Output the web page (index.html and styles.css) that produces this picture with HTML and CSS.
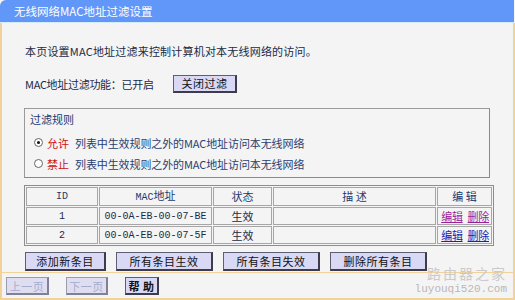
FILE: index.html
```html
<!DOCTYPE html>
<html lang="zh-CN">
<head>
<meta charset="utf-8">
<title>无线网络MAC地址过滤设置</title>
<link rel="stylesheet" href="styles.css">
</head>
<body>
<div class="page">
  <div class="title">无线网络MAC地址过滤设置</div>
  <div class="panel">
    <div class="content">
      <p class="intro">本页设置MAC地址过滤来控制计算机对本无线网络的访问。</p>
      <div class="status">
        <span class="status-label">MAC地址过滤功能：已开启</span>
        <button class="btn btn-close">关闭过滤</button>
      </div>
      <div class="rules">
        <div class="rules-title">过滤规则</div>
        <label class="rule"><span class="radio checked"></span><span class="red">允许</span><span class="rule-text">列表中生效规则之外的MAC地址访问本无线网络</span></label>
        <label class="rule"><span class="radio"></span><span class="red">禁止</span><span class="rule-text">列表中生效规则之外的MAC地址访问本无线网络</span></label>
      </div>
      <table class="list">
        <colgroup>
          <col class="c-id"><col class="c-mac"><col class="c-st"><col class="c-desc"><col class="c-edit">
        </colgroup>
        <tr class="head">
          <td class="mono">ID</td><td><span class="mono">MAC</span>地址</td><td>状态</td><td>描 述</td><td>编 辑</td>
        </tr>
        <tr>
          <td class="mono">1</td><td class="mono">00-0A-EB-00-07-BE</td><td>生效</td><td></td><td class="links"><a class="visited">编辑</a><a class="visited">删除</a></td>
        </tr>
        <tr>
          <td class="mono">2</td><td class="mono">00-0A-EB-00-07-5F</td><td>生效</td><td></td><td class="links"><a>编辑</a><a>删除</a></td>
        </tr>
      </table>
      <div class="actions">
        <button class="btn w81">添加新条目</button>
        <button class="btn w97">所有条目生效</button>
        <button class="btn w97">所有条目失效</button>
        <button class="btn w97">删除所有条目</button>
      </div>
    </div>
    <div class="footer">
      <button class="btn small disabled w43">上一页</button>
      <button class="btn small disabled w42">下一页</button>
      <button class="btn small help">帮 助</button>
    </div>
  </div>
  <div class="watermark">
    <div class="wm-cn">路由器之家</div>
    <div class="wm-en">luyouqi520.com</div>
  </div>
</div>
</body>
</html>
```

FILE: styles.css
```css
* { box-sizing: border-box; }
html, body { margin: 0; padding: 0; }
body {
  width: 515px;
  height: 300px;
  overflow: hidden;
  background: #f4f4f4;
  font-family: "Noto Sans CJK SC", "Noto Sans", sans-serif;
  font-size: 11px;
  color: #1c2a44;
}
.page {
  position: relative;
  width: 515px;
  height: 300px;
  display: flex;
  flex-direction: column;
}
.title {
  height: 23px;
  background: #6197f8;
  border-top-left-radius: 6px;
  border-bottom: 1px solid #d6ecfb;
  color: #fff;
  font-size: 11.5px;
  line-height: 22px;
  padding-left: 14px;
  margin-right: 1px;
}
.panel {
  flex: 1;
  display: flex;
  flex-direction: column;
  border-left: 2px solid #f1d39a;
  border-right: 2px solid #f1d39a;
  border-bottom: 2px solid #f1d39a;
  background: #f4f4f4;
}
.content {
  padding-left: 22px;
  height: 249px;
}
.intro {
  margin: 20px 0 0 1px;
  line-height: 16px;
  letter-spacing: 0.2px;
}
.status {
  margin-top: 16px;
  height: 18px;
  display: flex;
  align-items: center;
  padding-left: 1px;
}
.status-label { width: 148px; letter-spacing: -0.3px; }
.btn {
  font-family: "Noto Sans CJK SC", sans-serif;
  font-size: 11px;
  color: #111;
  background: #d9d9f6;
  border: 1px solid #5e5e72;
  border-right: 2px solid #3c3c4c;
  border-bottom: 2px solid #3c3c4c;
  height: 19px;
  padding: 0;
  line-height: 15px;
  letter-spacing: 0.5px;
}
.btn-close { width: 64px; height: 18px; }
.rules {
  margin-top: 15px;
  width: 466px;
  height: 70px;
  border: 1px solid #9a9a9a;
  border-right-color: #8a8a8a;
  border-bottom-color: #8a8a8a;
  padding-left: 5px;
}
.rules-title {
  line-height: 16px;
  margin-top: 2px;
  color: #223a6e;
}
.rule {
  display: flex;
  align-items: center;
  height: 21px;
  padding-left: 4px;
}
.rule:first-of-type { margin-top: 5px; }
.radio {
  width: 9px;
  height: 9px;
  border-radius: 50%;
  border: 1px solid #666;
  background: #fff;
  margin-right: 4px;
  position: relative;
}
.radio.checked::after {
  content: "";
  position: absolute;
  left: 2px;
  top: 2px;
  width: 3px;
  height: 3px;
  border-radius: 50%;
  background: #111;
}
.red { color: #d01010; margin-right: 6px; }
.rule-text { color: #2a3e70; letter-spacing: -0.1px; }
.list {
  margin-top: 7px;
  width: 466px;
  border-collapse: separate;
  border-spacing: 1px;
  border: 1px solid #8d8d8d;
  table-layout: fixed;
}
.c-id { width: 72px; }
.c-mac { width: 113px; }
.c-st { width: 59px; }
.c-desc { width: 163px; }
.c-edit { width: 55px; }
.list td {
  border: 1px solid #a6a6a6;
  height: 18px;
  padding: 0;
  text-align: center;
  line-height: 15px;
  white-space: nowrap;
}
.list td.links { text-align: right; padding-right: 2px; }
.list .head td { color: #243a6c; }
.mono {
  font-family: "Liberation Mono", "DejaVu Sans Mono", monospace;
  font-size: 10px;
}
.list a {
  color: #1a22b0;
  text-decoration: underline;
  letter-spacing: -0.3px;
}
.list a + a { margin-left: 5px; }
.list a.visited { color: #9a1f9a; }
.actions {
  margin-top: 6px;
  display: flex;
  gap: 10px;
  padding-left: 1px;
}
.w81 { width: 81px; }
.w97 { width: 97px; }
.footer {
  border-top: 1px solid #f1d39a;
  padding: 4px 0 0 4px;
  display: flex;
  gap: 17px;
}
.btn.small { height: 18px; line-height: 14px; }
.w43 { width: 43px; }
.w42 { width: 42px; }
.help { width: 34px; font-weight: bold; }
.btn.disabled {
  color: #a6acd0;
  background: #dedef0;
  border-color: #9c9cb0;
  border-right-color: #80809a;
  border-bottom-color: #80809a;
}
.watermark {
  position: absolute;
  right: 8px;
  bottom: 5px;
  text-align: right;
  pointer-events: none;
  display: flex;
  flex-direction: column;
  gap: 3px;
}
.wm-cn {
  font-family: "Noto Sans CJK SC", sans-serif;
  font-size: 14px;
  line-height: 15px;
  letter-spacing: 2px;
  color: #cacaca;
}
.wm-en {
  font-family: "Liberation Mono", monospace;
  font-size: 11px;
  line-height: 11px;
  color: #b8b8b8;
}
```
